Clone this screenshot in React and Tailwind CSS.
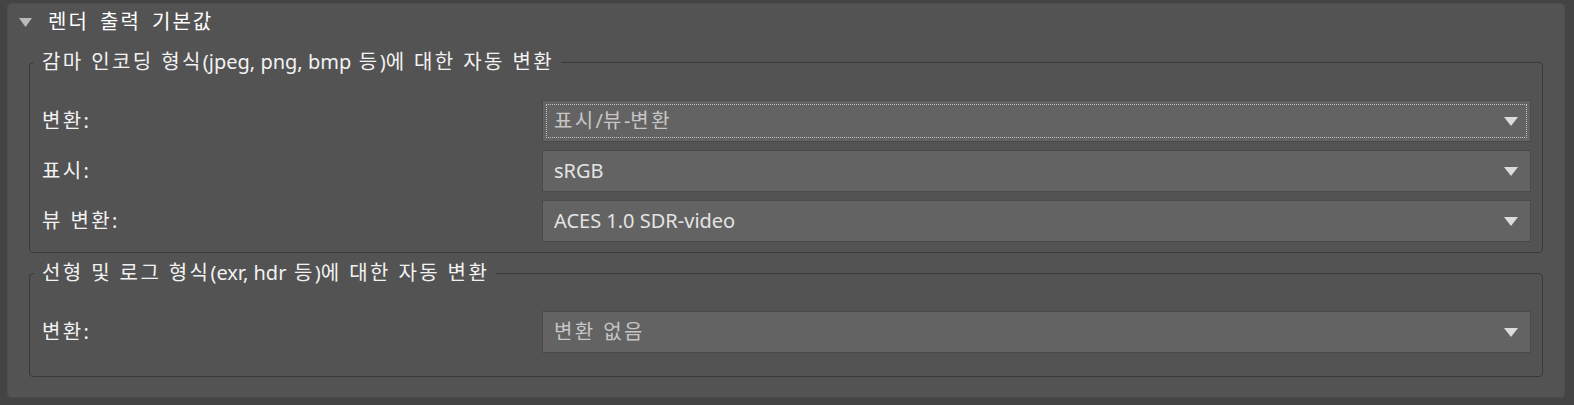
import React from 'react';

// Hangul in the reference is set wider than Noto CJK; widen only those runs
function K({ children }) {
  const parts = String(children).split(/( ?[\uAC00-\uD7A3][\uAC00-\uD7A3 ]*)/);
  return parts.map((p, i) =>
    /[\uAC00-\uD7A3]/.test(p) ? (
      <span key={i} className="tracking-[2.4px]">{p}</span>
    ) : (
      <span key={i}>{p}</span>
    )
  );
}

const Arrow = () => (
  <svg width="14" height="9" viewBox="0 0 14 9" className="shrink-0">
    <polygon points="0,0 14,0 7,9" fill="#dcdcdc" />
  </svg>
);

function Dropdown({ value, focused, dim }) {
  return (
    <div className="flex-1 h-[42px] border border-[#4a4a4a] bg-[#636363] p-[3px]">
      <div
        className={`h-full flex items-center justify-between pl-[7px] pr-[8px] border border-dotted ${
          focused ? 'border-[#c4c4c4]' : 'border-transparent'
        }`}
      >
        <span className={dim ? 'text-[#c6c6c6]' : 'text-[#e4e4e4]'}><K>{value}</K></span>
        <Arrow />
      </div>
    </div>
  );
}

function Row({ label, value, focused, dim }) {
  return (
    <div className="flex items-center">
      <div className="w-[500px] text-[#f2f2f2]"><K>{label}</K></div>
      <Dropdown value={value} focused={focused} dim={dim} />
    </div>
  );
}

function Group({ title, children, className }) {
  return (
    <fieldset className={`mx-[21px] border border-[#393939] rounded-[4px] pl-[12px] pr-[11px] ${className}`}>
      <legend className="-ml-[8px] pl-[8px] pr-[7px] leading-[24px] text-[#f2f2f2]"><K>{title}</K></legend>
      {children}
    </fieldset>
  );
}

export default function App() {
  return (
    <div className="w-[1574px] h-[405px] bg-[#444444] pt-[3px] pl-[7px] pr-[9px] pb-[7px] font-['Noto_Sans','Noto_Sans_CJK_KR',sans-serif] text-[20px] leading-[24px]">
      <div className="h-full bg-[#535353] rounded-[4px] border border-[#4c4c4c] flex flex-col">
        <div className="h-[36px] flex items-center pl-[11px] gap-[16px] shrink-0">
          <svg width="13" height="9" viewBox="0 0 13 9">
            <polygon points="0,0 13,0 6.5,9" fill="#b9b9b9" />
          </svg>
          <span className="text-white tracking-[2px] [word-spacing:4px]">렌더 출력 기본값</span>
        </div>

        <Group title="감마 인코딩 형식(jpeg, png, bmp 등)에 대한 자동 변환" className="mt-[10px] pb-[10px]">
          <div className="flex flex-col gap-[8px] pt-[26px]">
            <Row label="변환:" value="표시/뷰-변환" focused dim />
            <Row label="표시:" value="sRGB" />
            <Row label="뷰 변환:" value="ACES 1.0 SDR-video" />
          </div>
        </Group>

        <Group title="선형 및 로그 형식(exr, hdr 등)에 대한 자동 변환" className="mt-[8px] pb-[23px]">
          <div className="flex flex-col pt-[26px]">
            <Row label="변환:" value="변환 없음" dim />
          </div>
        </Group>
      </div>
    </div>
  );
}
